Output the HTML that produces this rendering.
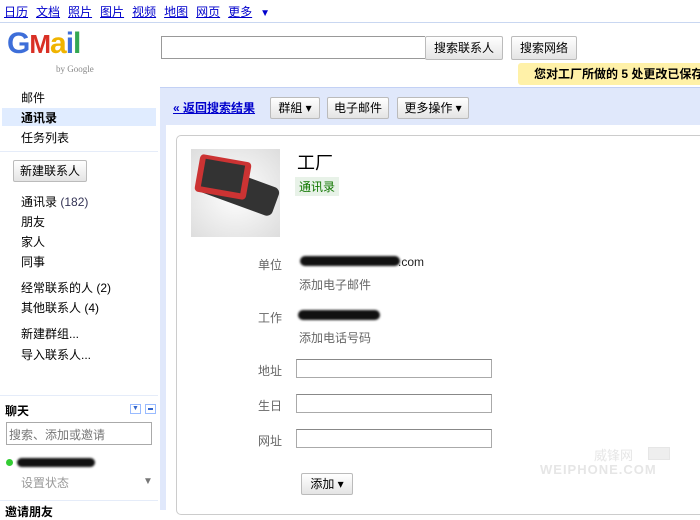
<!DOCTYPE html>
<html><head><meta charset="utf-8"><style>
*{margin:0;padding:0;box-sizing:border-box}
body{width:700px;height:510px;overflow:hidden;background:#fff;font-family:"Liberation Sans","Noto Sans CJK SC",sans-serif;font-size:12px;color:#000;position:relative}
.a{position:absolute}
.top a{color:#00c;text-decoration:underline;margin-right:8px;font-size:12px}
.btn{position:absolute;border:1px solid #bbb;border-radius:2px;background:linear-gradient(#fff,#e4e4e4);font-size:12px;text-align:center;line-height:20px;color:#000}
.nav{position:absolute;left:21px;font-size:12px}
.lbl{position:absolute;left:258px;color:#666;font-size:12px}
.inp{position:absolute;left:296px;width:196px;height:19px;border:1px solid #aaa;border-top-color:#888}
.gray{color:#666}
.blob{position:absolute;background:#111;border-radius:6px;filter:blur(1px)}
</style></head><body>
<div class="a top" style="left:4px;top:3px">
<a>日历</a><a>文档</a><a>照片</a><a>图片</a><a>视频</a><a>地图</a><a>网页</a><a>更多</a><span style="color:#00c;font-size:10px">▼</span></div>
<div class="a" style="left:0;top:22px;width:700px;height:1px;background:#c9d7f1"></div>
<div class="a" style="left:7px;top:27px;font:bold 30px 'Liberation Sans',sans-serif;letter-spacing:-1px">
<span style="color:#3d6ed9">G</span><span style="color:#d93025;font-size:26px">M</span><span style="color:#f0b400">a</span><span style="color:#3d6ed9">i</span><span style="color:#34a853">l</span></div>
<div class="a" style="left:56px;top:64px;font:9px 'Liberation Serif',serif;color:#888">by Google</div>
<div class="a" style="left:161px;top:36px;width:264px;height:23px;border:1px solid #999;border-right:none"></div>
<div class="btn" style="left:425px;top:36px;width:78px;height:24px;line-height:22px">搜索联系人</div>
<div class="btn" style="left:511px;top:36px;width:66px;height:24px;line-height:22px">搜索网络</div>
<div class="a" style="left:518px;top:63px;width:190px;height:22px;background:#fff1a8;border-radius:3px;font-weight:bold;font-size:12px;line-height:22px;padding-left:16px;white-space:nowrap">您对工厂所做的 5 处更改已保存</div>
<div class="nav" style="top:89px">邮件</div>
<div class="a" style="left:2px;top:108px;width:154px;height:18px;background:#e0ecff"></div>
<div class="nav" style="top:109px;font-weight:bold">通讯录</div>
<div class="nav" style="top:129px">任务列表</div>
<div class="a" style="left:0;top:151px;width:158px;height:1px;background:#e5ecf9"></div>
<div class="btn" style="left:13px;top:160px;width:74px;height:22px">新建联系人</div>
<div class="nav" style="top:193px">通讯录 <span style="color:#335">(182)</span></div>
<div class="nav" style="top:213px">朋友</div>
<div class="nav" style="top:233px">家人</div>
<div class="nav" style="top:253px">同事</div>
<div class="nav" style="top:279px">经常联系的人 (2)</div>
<div class="nav" style="top:299px">其他联系人 (4)</div>
<div class="nav" style="top:325px">新建群组...</div>
<div class="nav" style="top:346px">导入联系人...</div>
<div class="a" style="left:0;top:395px;width:158px;height:1px;background:#e5ecf9"></div>
<div class="a" style="left:5px;top:402px;font-weight:bold;font-size:12px">聊天</div>
<div class="a" style="left:130px;top:404px;width:11px;height:10px;border:1px solid #9bf;font-size:7px;color:#36c;text-align:center;line-height:8px">▼</div>
<div class="a" style="left:145px;top:404px;width:11px;height:10px;border:1px solid #9bf;"><div style="margin:3px 2px;height:2px;background:#36c"></div></div>
<div class="a" style="left:6px;top:422px;width:146px;height:23px;border:1px solid #aaa;color:#777;padding:3px 2px;font-size:12px">搜索、添加或邀请</div>
<div class="a" style="left:6px;top:459px;width:7px;height:7px;border-radius:50%;background:#3c3"></div>
<div class="blob" style="left:17px;top:458px;width:78px;height:9px"></div>
<div class="a gray" style="left:21px;top:474px;color:#999">设置状态</div>
<div class="a" style="left:143px;top:476px;color:#777;font-size:10px">▼</div>
<div class="a" style="left:0;top:500px;width:158px;height:1px;background:#e5ecf9"></div>
<div class="a" style="left:5px;top:503px;font-weight:bold">邀请朋友</div>
<div class="a" style="left:160px;top:87px;width:540px;height:423px;background:#e0e8fb;border-top:1px solid #c3d1f5"></div>
<div class="a" style="left:166px;top:125px;width:534px;height:385px;background:#fff"></div>
<div class="a" style="left:173px;top:99px;color:#00c;font-weight:bold;text-decoration:underline;font-size:12px">« 返回搜索结果</div>
<div class="btn" style="left:270px;top:97px;width:50px;height:22px">群組 ▾</div>
<div class="btn" style="left:327px;top:97px;width:62px;height:22px">电子邮件</div>
<div class="btn" style="left:397px;top:97px;width:72px;height:22px">更多操作 ▾</div>
<div class="a" style="left:176px;top:135px;width:530px;height:380px;border:1px solid #ccc;border-radius:5px"></div>
<div class="a" style="left:191px;top:149px;width:89px;height:88px;background:radial-gradient(#fff,#ddd)"></div>
<div class="a" style="left:200px;top:175px;width:78px;height:30px;background:#333;border-radius:6px;transform:rotate(20deg)"></div>
<div class="a" style="left:197px;top:158px;width:52px;height:38px;background:#c33;border-radius:4px;transform:rotate(10deg)"></div>
<div class="a" style="left:203px;top:162px;width:40px;height:28px;background:#333;transform:rotate(10deg)"></div>
<div class="a" style="left:297px;top:149px;font-size:18px">工厂</div>
<div class="a" style="left:295px;top:177px;background:#e8f2e8;color:#170;padding:1px 4px;font-size:12px">通讯录</div>
<div class="lbl" style="top:256px">单位</div>
<div class="blob" style="left:300px;top:256px;width:100px;height:10px"></div>
<div class="a" style="left:398px;top:255px;color:#222">.com</div>
<div class="a gray" style="left:299px;top:276px">添加电子邮件</div>
<div class="lbl" style="top:309px">工作</div>
<div class="blob" style="left:298px;top:310px;width:82px;height:10px"></div>
<div class="a gray" style="left:299px;top:329px">添加电话号码</div>
<div class="lbl" style="top:362px">地址</div><div class="inp" style="top:359px"></div>
<div class="lbl" style="top:397px">生日</div><div class="inp" style="top:394px"></div>
<div class="lbl" style="top:432px">网址</div><div class="inp" style="top:429px"></div>
<div class="btn" style="left:301px;top:473px;width:52px;height:22px">添加 ▾</div>
<div class="a" style="left:540px;top:462px;font:bold 13px 'Liberation Sans',sans-serif;color:#e6e6e6;letter-spacing:1px">WEIPHONE.COM</div>
<div class="a" style="left:594px;top:445px;font-size:13px;color:#e6e6e6">威锋网</div>
<div class="a" style="left:648px;top:447px;width:22px;height:13px;border:1px solid #e6e6e6;background:#eee"></div>
</body></html>
